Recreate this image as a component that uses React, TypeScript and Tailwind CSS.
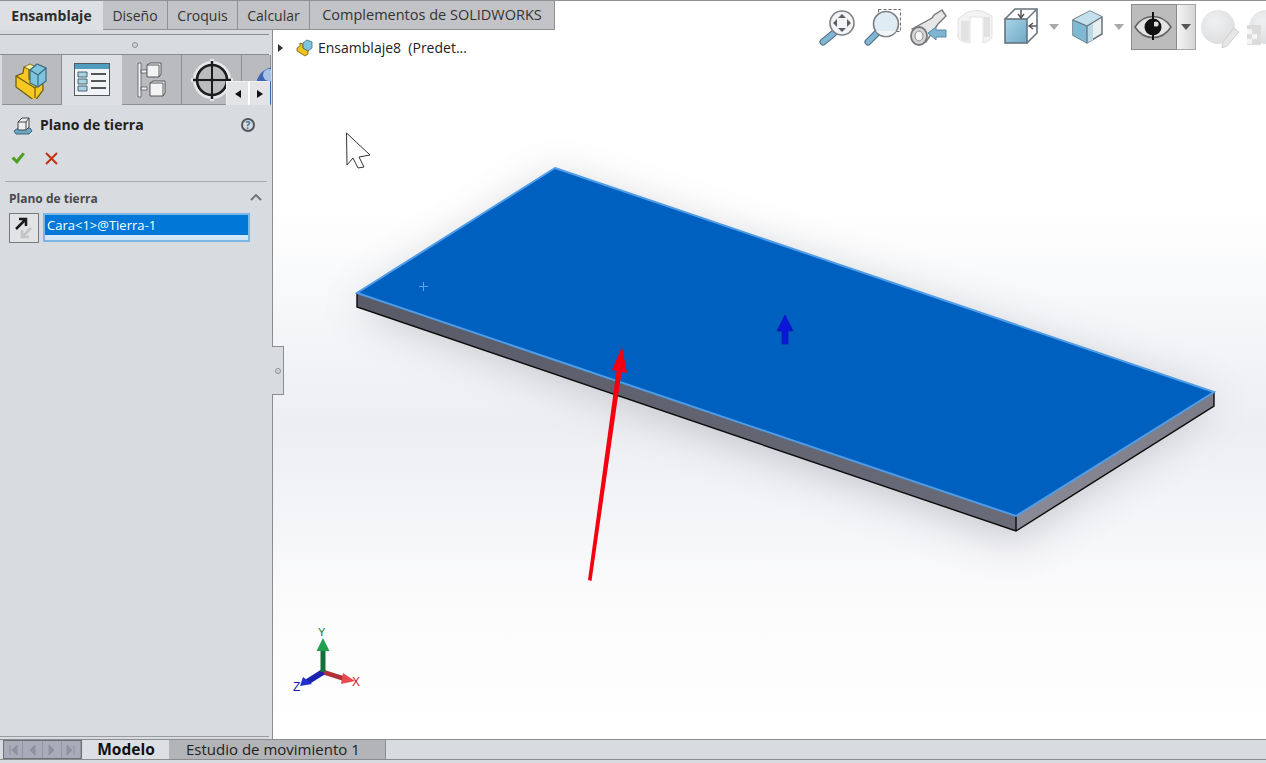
import React from 'react'

const font = "font-['Open_Sans','Noto_Sans',sans-serif]"

const TopTab = ({ label, width, size = 'text-[14px]', active }: { label: string; width: string; size?: string; active?: boolean }) => (
  <div
    className={`flex h-full items-center justify-center border-r border-[#8f9195] ${size} ${width} ${
      active ? 'bg-[#dcdfe4] font-bold text-[#2c2c2c] border-r-0' : 'border-b border-b-[#8f9195] bg-[#c1c3c6] text-[#333]'
    }`}
  >
    {label}
  </div>
)

const Handle = ({ x1, y1, x2, y2 }: { x1: number; y1: number; x2: number; y2: number }) => (
  <>
    <line x1={x1} y1={y1} x2={x2} y2={y2} stroke="#4d6b7c" strokeWidth="7" strokeLinecap="round" />
    <line x1={x1} y1={y1} x2={x2} y2={y2} stroke="#7fb6d3" strokeWidth="5" strokeLinecap="round" />
  </>
)

const Caret = () => (
  <svg width="12" height="8" viewBox="0 0 12 8">
    <path d="M1 1h10L6 7z" fill="#a9a9a9" />
  </svg>
)

const Toolbar = () => (
  <div className="absolute right-0 top-[-1px] flex h-[50px] items-start">
    <svg width="46" height="50" viewBox="818 0 46 50">
      <Handle x1={834} y1={33} x2={823} y2={42} />
      <circle cx="842" cy="23" r="12" fill="#f2f4f6" stroke="#7d7f82" strokeWidth="1.6" />
      <path d="M842 14l4 4h-8zM842 32l4-4h-8zM833 23l4-4v8zM851 23l-4-4v8z" fill="#5d5f62" />
    </svg>
    <svg width="44" height="50" viewBox="864 0 44 50">
      <rect x="878.500" y="9.500" width="22" height="22" fill="none" stroke="#6d6d6d" strokeDasharray="3 2" />
      <Handle x1={877} y1={33} x2={868} y2={42} />
      <circle cx="886" cy="24" r="12.500" fill="#dfecf4" stroke="#7d7f82" strokeWidth="1.6" />
      <path d="M876 31a13 13 0 0 0 20 0z" fill="#f3f6f8" />
    </svg>
    <svg width="42" height="50" viewBox="908 0 42 50">
      <path d="M912 29l20-11 2-3 8-5 4 6-5 5-3 3-12 18z" fill="#e6e6e6" stroke="#77797c" strokeWidth="1.400" />
      <ellipse cx="919" cy="36" rx="8" ry="9" fill="#d6d6d6" stroke="#77797c" strokeWidth="1.800" />
      <ellipse cx="919" cy="36" rx="4" ry="5" fill="#f5f5f5" stroke="#8c8c8c" />
      <path d="M928 33l8-6v3h10v7h-10v3z" fill="#7fb4d2" stroke="#5a8aa5" />
    </svg>
    <svg width="46" height="50" viewBox="950 0 46 50">
      <path d="M958 19q16-16 34-3v22q-4 4-9 5v-26h-13v26q-9-1-12-5z" fill="#f3f3f3" stroke="#e2e2e2" />
      <rect x="961" y="21" width="8" height="20" fill="#e2e2e2" />
      <rect x="984" y="17" width="6" height="20" fill="#e2e2e2" />
    </svg>
    <svg width="44" height="50" viewBox="1000 0 44 50" className="ml-[4px]">
      <defs>
        <linearGradient id="oriFace" x1="0" y1="0" x2="1" y2="1">
          <stop offset="0" stopColor="#a9d6e8" />
          <stop offset="1" stopColor="#6fa8c6" />
        </linearGradient>
      </defs>
      <path d="M1005 19l10-10h22v24l-10 10" fill="#fff" stroke="#66747c" strokeWidth="1.6" />
      <path d="M1027 19l10-10" stroke="#66747c" strokeWidth="1.4" />
      <rect x="1005" y="19" width="22" height="24" fill="url(#oriFace)" stroke="#66747c" strokeWidth="1.6" />
      <path d="M1021 10v7M1018 14l3 4 3-4M1037 26h-7M1033 23l-4 3 4 3" fill="none" stroke="#55595c" strokeWidth="1.5" />
    </svg>
    <div className="ml-[4px] mt-[23px] flex h-[8px] w-[12px]">
      <Caret />
    </div>
    <svg width="38" height="50" viewBox="1068 0 38 50" className="ml-[8px]">
      <path d="M1073 20l17-9 12 6v17l-15 9-14-8z" fill="#e9eef0" stroke="#66747c" strokeWidth="1.500" />
      <path d="M1073 20l14 6v17l-14-8z" fill="#7fb8d3" />
      <path d="M1073 20l17-9 12 6-15 9z" fill="#c3e0ec" />
      <path d="M1087 26v17l6-3v-17z" fill="#b8d8e6" />
      <path d="M1073 20l14 6 15-9M1087 26v17" fill="none" stroke="#66747c" strokeWidth="1.300" />
    </svg>
    <div className="ml-[7px] mt-[23px] flex h-[8px] w-[12px]">
      <Caret />
    </div>
    <div className="ml-[6px] mt-[4px] flex h-[46px] w-[46px] items-center justify-center border border-[#8a8a8a] bg-[#bcbcbc]">
      <svg width="40" height="36" viewBox="1134 9 40 36">
        <path d="M1135 27c9-14 27-14 36 0-9 14-27 14-36 0z" fill="#e4e4e4" stroke="#5f6264" strokeWidth="1.500" />
        <circle cx="1153" cy="27" r="8.500" fill="#111" />
        <circle cx="1156" cy="24" r="2.600" fill="#ddd" />
        <line x1="1153" y1="12" x2="1153" y2="40" stroke="#111" strokeWidth="2" />
      </svg>
    </div>
    <div className="mt-[4px] flex h-[46px] w-[19px] items-center justify-center border border-l-0 border-[#a8a8a8] bg-gradient-to-r from-[#f5f5f5] to-[#d5d5d5]">
      <svg width="10" height="6" viewBox="0 0 10 6">
        <path d="M0 0h10L5 6z" fill="#555" />
      </svg>
    </div>
    <svg width="44" height="50" viewBox="1198 0 44 50" className="ml-[2px]">
      <defs>
        <radialGradient id="ghost" cx="0.4" cy="0.35" r="0.7">
          <stop offset="0" stopColor="#f0f1f2" />
          <stop offset="1" stopColor="#dcdddf" />
        </radialGradient>
      </defs>
      <circle cx="1218" cy="27" r="17" fill="url(#ghost)" />
      <path d="M1222 48l1-6 11-14 5 4-12 14z" fill="#e6e6e6" stroke="#d0d0d0" />
    </svg>
    <svg width="22" height="50" viewBox="1244 0 22 50" className="ml-[2px]">
      <circle cx="1266" cy="27" r="17" fill="url(#ghost)" />
      <rect x="1247" y="25" width="14" height="20" fill="#dcdcdc" />
      <path d="M1247 29h5v5h-5zM1252 34h5v5h-5zM1247 39h5v5h-5z" fill="#f4f4f4" />
    </svg>
  </div>
)

const PanelTab = ({ active, children, width }: { active?: boolean; children: React.ReactNode; width: string }) => (
  <div
    className={`flex h-full items-center justify-center ${width} ${
      active ? 'bg-[#dcdfe4]' : 'border-r border-b border-[#8d8f92] bg-[#b9bbbe]'
    }`}
  >
    {children}
  </div>
)

const PanelTabs = () => (
  <div className="relative flex h-[50px] w-full overflow-hidden pl-[2px]">
    <PanelTab width="w-[60px]">
      <svg width="36" height="38" viewBox="15 62 36 38">
        <path d="M17 77l7-3 1-6 5 2v10l14 6v5l-8 11-19-14z" fill="#f5c921" stroke="#6a5a10" strokeWidth="1.200" />
        <path d="M25 68l6-3 6 3-6 3z" fill="#f8ef9c" stroke="#6a5a10" strokeWidth="0.800" />
        <path d="M17 77l19 12v10M36 89l8-7" fill="none" stroke="#6a5a10" strokeWidth="1.200" />
        <path d="M31 71l7-6 9 4v13l-8 6-8-4z" fill="#7dc4de" stroke="#3f6a7c" strokeWidth="1.200" />
        <path d="M31 71l8 5 8-7M39 76v12" fill="none" stroke="#3f6a7c" strokeWidth="1.200" />
      </svg>
    </PanelTab>
    <PanelTab active width="w-[60px]">
      <svg width="36" height="34" viewBox="0 0 36 34">
        <rect x="0.500" y="0.500" width="35" height="32" fill="#f2f5f7" stroke="#55585b" />
        <rect x="1" y="1" width="34" height="5" fill="#4f9cbc" />
        <path d="M4 9h9v5H4zM4 16h9v5H4zM4 23h9v5H4z" fill="#a9d3e4" stroke="#46616e" />
        <path d="M17 11h15M17 18h15M17 25h15" stroke="#222" strokeWidth="1.500" />
      </svg>
    </PanelTab>
    <PanelTab width="w-[60px]">
      <svg width="30" height="36" viewBox="0 0 30 36">
        <path d="M1 1h3v34H1zM4 8h6v3H4zM4 25h6v3H4z" fill="#f3f3f3" stroke="#55585b" strokeWidth="0.800" />
        <path d="M10 3l3-2h11v11l-2 3H10z" fill="#f3f3f3" stroke="#55585b" />
        <path d="M13 21l3-2h12v12l-2 3H13z" fill="#f3f3f3" stroke="#55585b" />
        <path d="M10 3h12v12M13 21h13v13" fill="none" stroke="#55585b" />
      </svg>
    </PanelTab>
    <PanelTab width="w-[60px]">
      <svg width="44" height="44" viewBox="0 0 44 44">
        <circle cx="22" cy="22" r="17" fill="none" stroke="#e6e7e8" strokeWidth="4" />
        <path d="M22 1v42M1 22h42" stroke="#e6e7e8" strokeWidth="4" />
        <circle cx="22" cy="22" r="15" fill="none" stroke="#1c1c1c" strokeWidth="2.600" />
        <path d="M22 3v38M3 22h38" stroke="#1c1c1c" strokeWidth="2.400" />
      </svg>
    </PanelTab>
    <PanelTab width="w-[29px]">
      <svg width="29" height="48" viewBox="0 0 29 48" className="shrink-0">
        <circle cx="33" cy="30" r="19" fill="#3c67b4" />
        <circle cx="27" cy="19" r="6" fill="#a9c2e8" />
      </svg>
    </PanelTab>
    <div className="absolute right-[2px] bottom-0 flex h-[24px] w-[44px] border-t border-l border-[#f2f2f2] bg-[#e3e4e6]">
      <div className="flex h-full w-[23px] items-center justify-center border-r-2 border-white">
        <svg width="6" height="8" viewBox="0 0 6 8">
          <path d="M6 0v8L0 4z" fill="#111" />
        </svg>
      </div>
      <div className="flex h-full flex-1 items-center justify-center">
        <svg width="6" height="8" viewBox="0 0 6 8">
          <path d="M0 0v8l6-4z" fill="#111" />
        </svg>
      </div>
    </div>
  </div>
)

const Panel = () => (
  <aside className="relative z-10 flex h-full w-[273px] shrink-0 flex-col border-r border-[#8b8c8e] bg-[#d8dbe0]">
    <div className="mr-[3px] mt-[4px] flex h-[21px] items-center justify-center border-y border-[#8a8c8f]">
      <div className="h-[6px] w-[6px] rounded-full border border-[#8f9092] bg-[#d0d2d5]" />
    </div>
    <PanelTabs />
    <div className="flex h-[39px] items-center pl-[13px] pr-[17px]">
      <svg width="20" height="20" viewBox="0 0 20 20">
        <path d="M1 16l4-3h12l2 3-3 3H3z" fill="#6ba7c4" stroke="#3e6779" />
        <path d="M5 7l4-4h7v9l-3 3H5z" fill="#eceded" stroke="#44474a" />
        <path d="M5 7h8v8M13 7l3-4" fill="none" stroke="#44474a" />
      </svg>
      <span className="ml-[7px] flex-1 text-[14px] font-bold leading-none text-[#222]">Plano de tierra</span>
      <div className="flex h-[14px] w-[14px] items-center justify-center rounded-full border-2 border-[#50565a] text-[10px] font-bold leading-none text-[#3a6f95]">
        ?
      </div>
    </div>
    <div className="flex h-[28px] items-center gap-[20px] pl-[11px]">
      <svg width="14" height="14" viewBox="0 0 14 14">
        <path d="M0.500 7.500l2.500-2 2.500 3L11.500 1.500 14 3l-8 10z" fill="#4c9f1f" />
      </svg>
      <svg width="13" height="13" viewBox="0 0 13 13">
        <path d="M1 1l11 11M12 1L1 12" stroke="#cb2d12" strokeWidth="2" />
      </svg>
    </div>
    <div className="mx-[5px] mt-[9px] border-t border-[#a9abae]" />
    <div className="flex h-[31px] items-center justify-between pl-[9px] pr-[10px] pt-[2px]">
      <span className="text-[12px] font-bold text-[#484a4d]">Plano de tierra</span>
      <svg width="12" height="7" viewBox="0 0 12 7" className="mb-[2px]">
        <path d="M1 6l5-5 5 5" fill="none" stroke="#6e7073" strokeWidth="1.800" />
      </svg>
    </div>
    <div className="flex h-[30px] items-start pl-[9px]">
      <div className="flex h-[30px] w-[30px] items-center justify-center border border-[#77797c] bg-[#e2e3e5]">
        <svg width="20" height="22" viewBox="0 0 20 22">
          <path d="M17 11L8 20M8 13v7h7" fill="none" stroke="#c2c4c7" strokeWidth="2.500" />
          <path d="M2 12L11 3M5 2h7v7" fill="none" stroke="#1b1b1b" strokeWidth="2.500" />
        </svg>
      </div>
      <div className="ml-[4px] h-[29px] w-[207px] border-2 border-[#7ab7e6] bg-[#d3e6f6]">
        <div className="flex h-[20px] items-center bg-[#0078d7] pl-[2px] pt-[2px] text-[13px] text-white">
          Cara&lt;1&gt;@Tierra-1
        </div>
      </div>
    </div>
    <div className="mb-[2px] mr-[3px] mt-auto border-t border-[#9a9c9f]" />
    <div className="absolute left-[272px] top-[316px] flex h-[49px] w-[12px] items-center justify-center border-y border-r border-[#8b8c8e] bg-[#d8dbe0]">
      <div className="h-[6px] w-[6px] rounded-full border border-[#8f9092] bg-[#d0d2d5]" />
    </div>
  </aside>
)

const Scene = () => (
  <svg className="absolute inset-0 h-full w-full" viewBox="273 30 993 709">
    <defs>
      <filter id="soft" x="-20%" y="-30%" width="140%" height="160%">
        <feGaussianBlur stdDeviation="22" />
      </filter>
      <linearGradient id="leftFace" x1="0" y1="0" x2="1" y2="0">
        <stop offset="0" stopColor="#5a5b68" />
        <stop offset="1" stopColor="#6a6b78" />
      </linearGradient>
      <linearGradient id="rightFace" x1="0" y1="1" x2="1" y2="0">
        <stop offset="0" stopColor="#8a8b97" />
        <stop offset="1" stopColor="#7a7b87" />
      </linearGradient>
    </defs>
    <polygon points="555,178 1214,402 1016,540 357,310" fill="#8c8e98" opacity="0.45" filter="url(#soft)" />
    <polygon points="357,293 1016,516 1016,531 357,307" fill="url(#leftFace)" />
    <polygon points="1016,516 1214,392 1214,406 1016,531" fill="url(#rightFace)" />
    <path d="M357 293v14L1016 531l198-125v-14M1016 516v15" fill="none" stroke="#0b0b0b" strokeWidth="1.400" />
    <polygon points="555,168 1214,392 1016,516 357,293" fill="#0060bf" />
    <polygon points="555,168 1214,392 1016,516 357,293" fill="none" stroke="#4f9de8" strokeWidth="2" />
    <path d="M423.500 282v9M419 286.500h9" stroke="#5ea6ea" strokeWidth="1" />
    <path d="M785 315l8 16h-5v13h-6v-13h-5z" fill="#0b16d8" stroke="#0a12b0" strokeWidth="0.600" />
    <polygon points="622,347 627,373 621.500,372 591.500,581 588,580 616.500,371 612,370" fill="#f40010" />
    <path d="M346.500 133L370 155L359 157L364 167L358 168L353 158L347 165Z" fill="#fff" stroke="#333" strokeWidth="1" />
    <g>
      <path d="M323 672l22 7" stroke="#b03038" strokeWidth="4.500" />
      <path d="M343 673l12 8-14 3z" fill="#e84a50" />
      <path d="M323 672l-16 10" stroke="#1a22b0" strokeWidth="6" />
      <path d="M300 686l3-9 9 7z" fill="#2230d0" />
      <path d="M323 672v-22" stroke="#14703a" strokeWidth="5" />
      <path d="M323 638l6.500 13h-13z" fill="#22a050" />
    </g>
    <text x="318" y="636" fontSize="11" fill="#157a30" fontFamily="Liberation Sans">Y</text>
    <text x="352" y="686" fontSize="12" fill="#c8202a" fontFamily="Liberation Sans">X</text>
    <text x="293" y="691" fontSize="12" fill="#1a20b0" fontFamily="Liberation Sans">Z</text>
  </svg>
)

const Viewport = () => (
  <main className="relative h-full flex-1 bg-[linear-gradient(180deg,#ffffff_0%,#ffffff_25%,#eceef2_56%,#fbfbfc_80%,#ffffff_100%)]">
    <Scene />
    <div className="absolute left-[5px] top-[7px] flex items-center text-[14px] text-[#222]">
      <svg width="6" height="8" viewBox="0 0 6 8" className="mr-[12px]">
        <path d="M0 0v8l5-4z" fill="#333" />
      </svg>
      <svg width="18" height="18" viewBox="0 0 18 18" className="mr-[4px]">
        <path d="M1 9l3-2V4l3 1v4l5 3v3l-3 2-8-5z" fill="#f2c21c" stroke="#6a5a10" strokeWidth="0.800" />
        <path d="M7 4l4-3 5 2v6l-4 3-5-3z" fill="#7dc4de" stroke="#3f6a7c" strokeWidth="0.800" />
      </svg>
      <span>Ensamblaje8 &nbsp;(Predet...</span>
    </div>
  </main>
)

const BottomBar = () => (
  <footer className="h-[24px] shrink-0 border-t border-[#8b8c8e] bg-[#d8dbe0]">
    <div className="flex h-[20px] border-b border-[#8b8c8e]">
      <div className="ml-[3px] flex h-full w-[79px] border border-[#6e7079] bg-[#a9abb9]">
        {['M1 0v10M8 0v10L3 5z', 'M7 0v10L2 5z', 'M2 0v10l5-5z', 'M1 0v10l5-5zM8 0v10'].map((d) => (
          <div key={d} className="flex h-full flex-1 items-center justify-center border-r border-[#9295a3]">
            <svg width="9" height="10" viewBox="0 0 9 10">
              <path d={d} fill="#8f909c" stroke="#8f909c" />
            </svg>
          </div>
        ))}
      </div>
      <div className="ml-[1px] flex h-full w-[86px] items-center justify-center bg-[#dcdfe4] text-[15.5px] font-bold text-[#111]">
        Modelo
      </div>
      <div className="flex h-full w-[217px] items-center border-r border-[#8b8c8e] bg-[#b2b4b7] pl-[17px] text-[15px] text-[#222]">
        Estudio de movimiento 1
      </div>
    </div>
  </footer>
)

const App: React.FC = () => {
  return (
    <div className={`flex h-[763px] w-[1266px] flex-col overflow-hidden bg-white ${font}`}>
      <header className="relative z-20 flex h-[30px] shrink-0 border-t border-[#8f9195]">
        <TopTab label="Ensamblaje" width="w-[103px]" active />
        <TopTab label="Diseño" width="w-[65px]" />
        <TopTab label="Croquis" width="w-[70px]" />
        <TopTab label="Calcular" width="w-[72px]" />
        <TopTab label="Complementos de SOLIDWORKS" width="w-[245px]" size="text-[14.5px]" />
        <Toolbar />
      </header>
      <div className="flex min-h-0 flex-1">
        <Panel />
        <Viewport />
      </div>
      <BottomBar />
    </div>
  )
}

export default App
